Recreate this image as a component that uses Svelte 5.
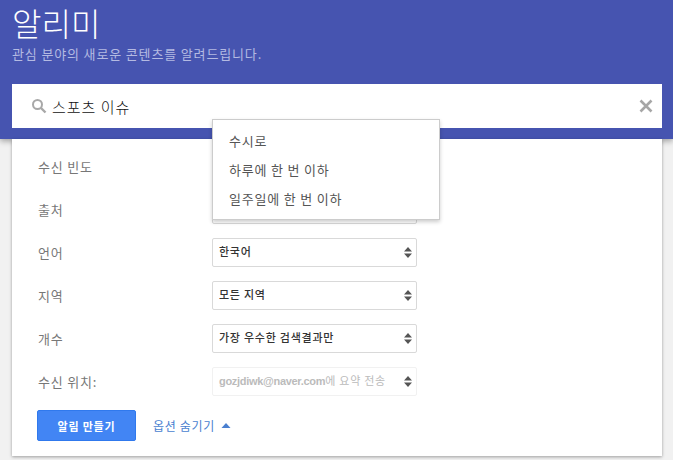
<script>
  // the first two selects sit behind the open menu, so their values are not visible
  const rows = [
    { label: "수신 빈도", value: "" },
    { label: "출처", value: "" },
    { label: "언어", value: "한국어" },
    { label: "지역", value: "모든 지역" },
    { label: "개수", value: "가장 우수한 검색결과만" },
    { label: "수신 위치:", email: "gozjdiwk@naver.com", value: "에 요약 전송", disabled: true }
  ];
  const options = ["수시로", "하루에 한 번 이하", "일주일에 한 번 이하"];
</script>

<main>
  <!-- blue header with the search box -->
  <header>
    <h1>알리미</h1>
    <p>관심 분야의 새로운 콘텐츠를 알려드립니다.</p>
    <div class="search">
      <svg class="loupe" width="16" height="16" viewBox="0 0 16 16">
        <circle cx="6.5" cy="6.5" r="4.5" fill="none" stroke="#a8a8a8" stroke-width="2" />
        <path d="M10 10l4.5 4.5" stroke="#a8a8a8" stroke-width="2.4" />
      </svg>
      <span class="query">스포츠 이슈</span>
      <svg class="clear" width="14" height="14" viewBox="0 0 14 14">
        <path d="M1.500 1.500l11 11M12.500 1.500l-11 11" stroke="#a6a6a6" stroke-width="2.6" />
      </svg>
    </div>
  </header>

  <!-- options card -->
  <section class="card">
    {#each rows as row}
      <div class="row">
        <span class="label">{row.label}</span>
        <div class="select" class:disabled={row.disabled}>
          <span class="value">{#if row.email}<b>{row.email}</b>{/if}{row.value}</span>
          <svg width="8" height="13" viewBox="0 0 8 13">
            <path d="M4 1L8 5.500H0zM4 12L0 7.500h8z" fill="#555" />
          </svg>
        </div>
      </div>
    {/each}
    <div class="actions">
      <button>알림 만들기</button>
      <span class="toggle">옵션 숨기기</span>
      <svg width="10" height="5" viewBox="0 0 10 5"><path d="M5 0l4.500 5H.5z" fill="#4a7fd0" /></svg>
    </div>
    <ul class="menu">
      {#each options as option}
        <li>{option}</li>
      {/each}
    </ul>
  </section>
</main>

<style>
  :global(body) {
    background: #f1f1f1;
    font-family: "Noto Sans CJK KR", "Noto Sans", sans-serif;
  }
  main {
    height: 460px;
    overflow: hidden;
  }
  header {
    position: relative;
    z-index: 1;
    height: 139px;
    box-sizing: border-box;
    padding: 0 11px 0 12px;
    background: #4654b0;
    box-shadow: 0 2px 6px rgba(0, 0, 0, 0.35);
  }
  h1 {
    margin: 0;
    padding-top: 2px;
    height: 43px;
    font-size: 32px;
    line-height: 40px;
    font-weight: 300;
    color: #fff;
  }
  p {
    margin: 0;
    height: 39px;
    font-size: 13px;
    line-height: 18px;
    letter-spacing: 0.85px;
    color: #b4bae2;
  }
  .search {
    display: flex;
    align-items: center;
    height: 44px;
    padding: 0 9px 0 19px;
    background: #fff;
  }
  .loupe {
    margin-top: -1px;
  }
  .query {
    flex: 1;
    margin-left: 5px;
    padding-top: 1px;
    font-size: 15px;
    letter-spacing: 1px;
    font-weight: 300;
    color: #111;
  }
  .card {
    position: relative;
    z-index: 2;
    height: 317px;
    box-sizing: border-box;
    margin: 0 11px 0 12px;
    padding: 13px 25px 0;
    background: #fff;
    box-shadow: 0 1px 3px rgba(0, 0, 0, 0.35);
  }
  .row {
    display: flex;
    align-items: center;
    height: 29px;
    margin-bottom: 14px;
  }
  .label {
    width: 174px;
    padding-left: 1px;
    font-size: 13px;
    letter-spacing: 0.8px;
    color: #777;
  }
  .select {
    display: flex;
    align-items: center;
    justify-content: space-between;
    width: 205px;
    height: 29px;
    box-sizing: border-box;
    padding: 0 4px 0 6px;
    border: 1px solid #d9d9d9;
    border-radius: 2px;
  }
  .value {
    padding-bottom: 3px;
    font-size: 11px;
    letter-spacing: 0.75px;
    font-weight: 500;
    color: #333;
  }
  .select.disabled {
    border-color: #f1f1f1;
  }
  .disabled .value {
    font-weight: 400;
    color: #bbb;
  }
  .disabled b {
    font-family: "Liberation Sans", sans-serif;
    font-weight: 700;
    letter-spacing: -0.3px;
  }
  .actions {
    display: flex;
    align-items: center;
    margin-top: 1px;
  }
  button {
    width: 99px;
    height: 31px;
    padding: 0;
    border: 1px solid #3079ed;
    border-radius: 2px;
    background: #4285f4;
    color: #fff;
    font: 700 11px "Noto Sans CJK KR", sans-serif;
    letter-spacing: 0.8px;
  }
  .toggle {
    margin: 0 6px 0 17px;
    font-size: 12px;
    letter-spacing: 0.7px;
    color: #4a7fd0;
  }
  .menu {
    position: absolute;
    left: 200px;
    top: -20px;
    width: 228px;
    height: 101px;
    box-sizing: border-box;
    margin: 0;
    padding: 6px 0 0 16px;
    list-style: none;
    background: #fff;
    border: 1px solid #ccc;
    box-shadow: 0 2px 4px rgba(0, 0, 0, 0.2);
  }
  .menu li {
    height: 29px;
    font-size: 13px;
    line-height: 29px;
    letter-spacing: 0.8px;
    color: #555;
  }
</style>
